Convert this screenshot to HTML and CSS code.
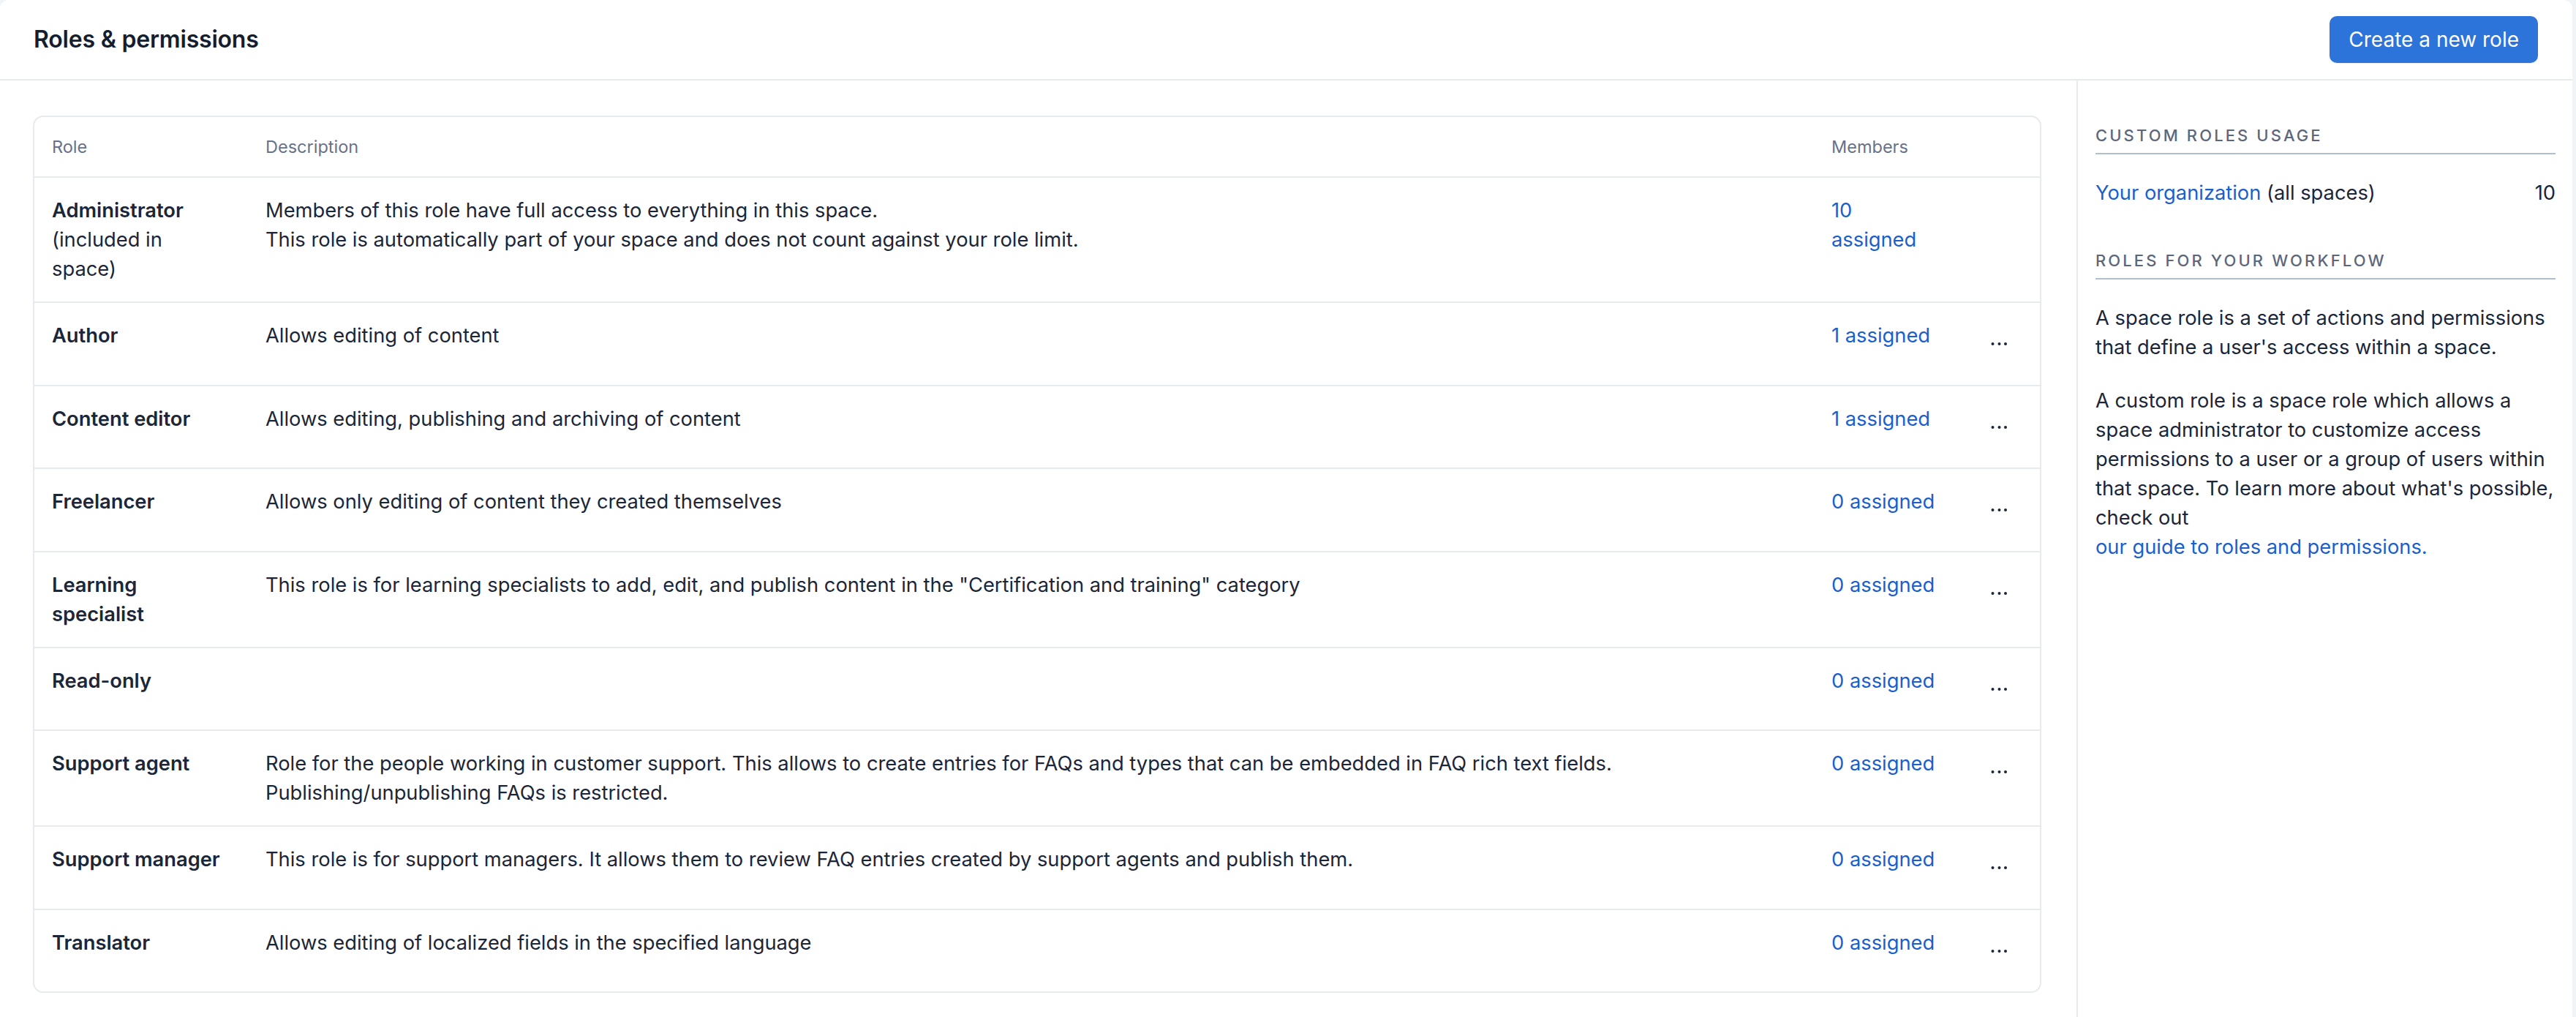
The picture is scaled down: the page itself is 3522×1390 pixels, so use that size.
FILE: index.html
```html
<!DOCTYPE html>
<html lang="en">
<head>
<meta charset="utf-8">
<title>Roles &amp; permissions</title>
<link rel="stylesheet" href="styles.css">
</head>
<body>
<div class="panel">
  <header class="topbar">
    <h1 class="title">Roles &amp; permissions</h1>
    <button class="btn-primary" type="button">Create a new role</button>
  </header>
  <div class="content">
    <main class="main">
      <div class="card">
        <table class="roles">
          <colgroup>
            <col class="col-role">
            <col class="col-desc">
            <col class="col-members">
            <col class="col-actions">
          </colgroup>
          <thead>
            <tr><th>Role</th><th>Description</th><th>Members</th><th></th></tr>
          </thead>
          <tbody>
            <tr>
              <td class="role"><strong>Administrator</strong><span class="role-note">(included in<br>space)</span></td>
              <td class="desc">Members of this role have full access to everything in this space.<br>This role is automatically part of your space and does not count against your role limit.</td>
              <td class="members"><a class="link" href="#">10<br>assigned</a></td>
              <td class="actions"></td>
            </tr>
            <tr>
              <td class="role"><strong>Author</strong></td>
              <td class="desc">Allows editing of content</td>
              <td class="members"><a class="link" href="#">1 assigned</a></td>
              <td class="actions"><button class="more" type="button" aria-label="More"><svg width="26" height="6" viewBox="0 0 26 6"><circle cx="3.5" cy="3" r="2"/><circle cx="12.5" cy="3" r="2"/><circle cx="21" cy="3" r="2"/></svg></button></td>
            </tr>
            <tr>
              <td class="role"><strong>Content editor</strong></td>
              <td class="desc">Allows editing, publishing and archiving of content</td>
              <td class="members"><a class="link" href="#">1 assigned</a></td>
              <td class="actions"><button class="more" type="button" aria-label="More"><svg width="26" height="6" viewBox="0 0 26 6"><circle cx="3.5" cy="3" r="2"/><circle cx="12.5" cy="3" r="2"/><circle cx="21" cy="3" r="2"/></svg></button></td>
            </tr>
            <tr>
              <td class="role"><strong>Freelancer</strong></td>
              <td class="desc">Allows only editing of content they created themselves</td>
              <td class="members"><a class="link" href="#">0 assigned</a></td>
              <td class="actions"><button class="more" type="button" aria-label="More"><svg width="26" height="6" viewBox="0 0 26 6"><circle cx="3.5" cy="3" r="2"/><circle cx="12.5" cy="3" r="2"/><circle cx="21" cy="3" r="2"/></svg></button></td>
            </tr>
            <tr>
              <td class="role"><strong>Learning<br>specialist</strong></td>
              <td class="desc">This role is for learning specialists to add, edit, and publish content in the "Certification and training" category</td>
              <td class="members"><a class="link" href="#">0 assigned</a></td>
              <td class="actions"><button class="more" type="button" aria-label="More"><svg width="26" height="6" viewBox="0 0 26 6"><circle cx="3.5" cy="3" r="2"/><circle cx="12.5" cy="3" r="2"/><circle cx="21" cy="3" r="2"/></svg></button></td>
            </tr>
            <tr>
              <td class="role"><strong>Read-only</strong></td>
              <td class="desc"></td>
              <td class="members"><a class="link" href="#">0 assigned</a></td>
              <td class="actions"><button class="more" type="button" aria-label="More"><svg width="26" height="6" viewBox="0 0 26 6"><circle cx="3.5" cy="3" r="2"/><circle cx="12.5" cy="3" r="2"/><circle cx="21" cy="3" r="2"/></svg></button></td>
            </tr>
            <tr>
              <td class="role"><strong>Support agent</strong></td>
              <td class="desc">Role for the people working in customer support. This allows to create entries for FAQs and types that can be embedded in FAQ rich text fields.<br>Publishing/unpublishing FAQs is restricted.</td>
              <td class="members"><a class="link" href="#">0 assigned</a></td>
              <td class="actions"><button class="more" type="button" aria-label="More"><svg width="26" height="6" viewBox="0 0 26 6"><circle cx="3.5" cy="3" r="2"/><circle cx="12.5" cy="3" r="2"/><circle cx="21" cy="3" r="2"/></svg></button></td>
            </tr>
            <tr>
              <td class="role"><strong>Support manager</strong></td>
              <td class="desc">This role is for support managers. It allows them to review FAQ entries created by support agents and publish them.</td>
              <td class="members"><a class="link" href="#">0 assigned</a></td>
              <td class="actions"><button class="more" type="button" aria-label="More"><svg width="26" height="6" viewBox="0 0 26 6"><circle cx="3.5" cy="3" r="2"/><circle cx="12.5" cy="3" r="2"/><circle cx="21" cy="3" r="2"/></svg></button></td>
            </tr>
            <tr>
              <td class="role"><strong>Translator</strong></td>
              <td class="desc">Allows editing of localized fields in the specified language</td>
              <td class="members"><a class="link" href="#">0 assigned</a></td>
              <td class="actions"><button class="more" type="button" aria-label="More"><svg width="26" height="6" viewBox="0 0 26 6"><circle cx="3.5" cy="3" r="2"/><circle cx="12.5" cy="3" r="2"/><circle cx="21" cy="3" r="2"/></svg></button></td>
            </tr>
          </tbody>
        </table>
      </div>
    </main>
    <aside class="sidebar">
      <h2 class="side-heading">Custom roles usage</h2>
      <div class="usage">
        <span><a class="link" href="#">Your organization</a> (all spaces)</span>
        <span>10</span>
      </div>
      <h2 class="side-heading">Roles for your workflow</h2>
      <p class="side-text">A space role is a set of actions and permissions<br>that define a user's access within a space.</p>
      <p class="side-text">A custom role is a space role which allows a<br>space administrator to customize access<br>permissions to a user or a group of users within<br>that space. To learn more about what's possible,<br>check out <a class="link block" href="#">our guide to roles and permissions.</a></p>
    </aside>
  </div>
</div>
</body>
</html>
```

FILE: styles.css
```css
* { box-sizing: border-box; }

html, body {
  margin: 0;
  padding: 0;
  background: #f1f4f6;
}

body {
  font-family: Inter, "Noto Sans", "Liberation Sans", sans-serif;
  color: #1b2638;
  font-size: 27.3px;
  line-height: 40px;
}

.panel {
  margin-right: 5px;
  min-height: 100vh;
  background: #ffffff;
  border-radius: 12px 12px 0 0;
  display: flex;
  flex-direction: column;
}

.topbar {
  height: 110px;
  flex: none;
  display: flex;
  align-items: center;
  justify-content: space-between;
  padding: 0 47px 0 46px;
  border-bottom: 2px solid #e7ebee;
}

.title {
  margin: 0;
  font-size: 32px;
  font-weight: 600;
  line-height: 40px;
  color: #141e2e;
  letter-spacing: -0.2px;
}

.btn-primary {
  height: 64px;
  padding: 0 26px;
  border: none;
  border-radius: 10px;
  background: #2c73da;
  color: #ffffff;
  font-family: inherit;
  font-size: 28px;
  font-weight: 400;
  cursor: pointer;
  box-shadow: 0 1px 1px rgba(0, 0, 0, 0.08);
}

.content {
  flex: 1;
  display: flex;
}

.main {
  flex: 1;
  padding: 48px 48px 0 45px;
}

.card {
  border: 2px solid #e7ebee;
  border-radius: 14px;
  overflow: hidden;
}

.roles {
  width: 100%;
  table-layout: fixed;
  border-collapse: collapse;
}

.col-role { width: 292px; }
.col-desc { width: 2141px; }
.col-members { width: 194px; }
.col-actions { width: 115px; }

.roles th {
  text-align: left;
  font-weight: 400;
  font-size: 23.5px;
  line-height: 32px;
  color: #67728a;
  padding: 25px 24px 24px 24px;
  border-bottom: 2px solid #e7ebee;
}

.roles td {
  vertical-align: top;
  padding: 25px 24px 24px 24px;
  border-bottom: 2px solid #e7ebee;
}

.roles tbody tr:last-child td {
  border-bottom: none;
}

.role {
  white-space: nowrap;
}

.role strong {
  display: block;
  font-weight: 600;
}

.role-note {
  display: block;
}

.members {
  white-space: nowrap;
}

.roles td.actions {
  padding-left: 29px;
}

.more {
  width: 62px;
  height: 62.5px;
  padding: 0;
  border: none;
  background: transparent;
  display: flex;
  align-items: center;
  justify-content: center;
  cursor: pointer;
}

.more svg {
  fill: #1b2638;
  display: block;
}

.link {
  color: #1a5fcc;
  text-decoration: none;
}

.link.block {
  display: block;
}

.sidebar {
  width: 678px;
  flex: none;
  border-left: 2px solid #e7ebee;
  padding: 59px 23px 0 24px;
}

.side-heading {
  margin: 0 0 33px 0;
  padding-bottom: 8px;
  border-bottom: 2px solid #afbfcd;
  font-size: 22px;
  line-height: 32px;
  font-weight: 500;
  letter-spacing: 3.1px;
  text-transform: uppercase;
  color: #5c677c;
}

.usage {
  display: flex;
  justify-content: space-between;
  margin-bottom: 56px;
}

.side-text {
  margin: 0 0 33px 0;
  white-space: nowrap;
}
```
